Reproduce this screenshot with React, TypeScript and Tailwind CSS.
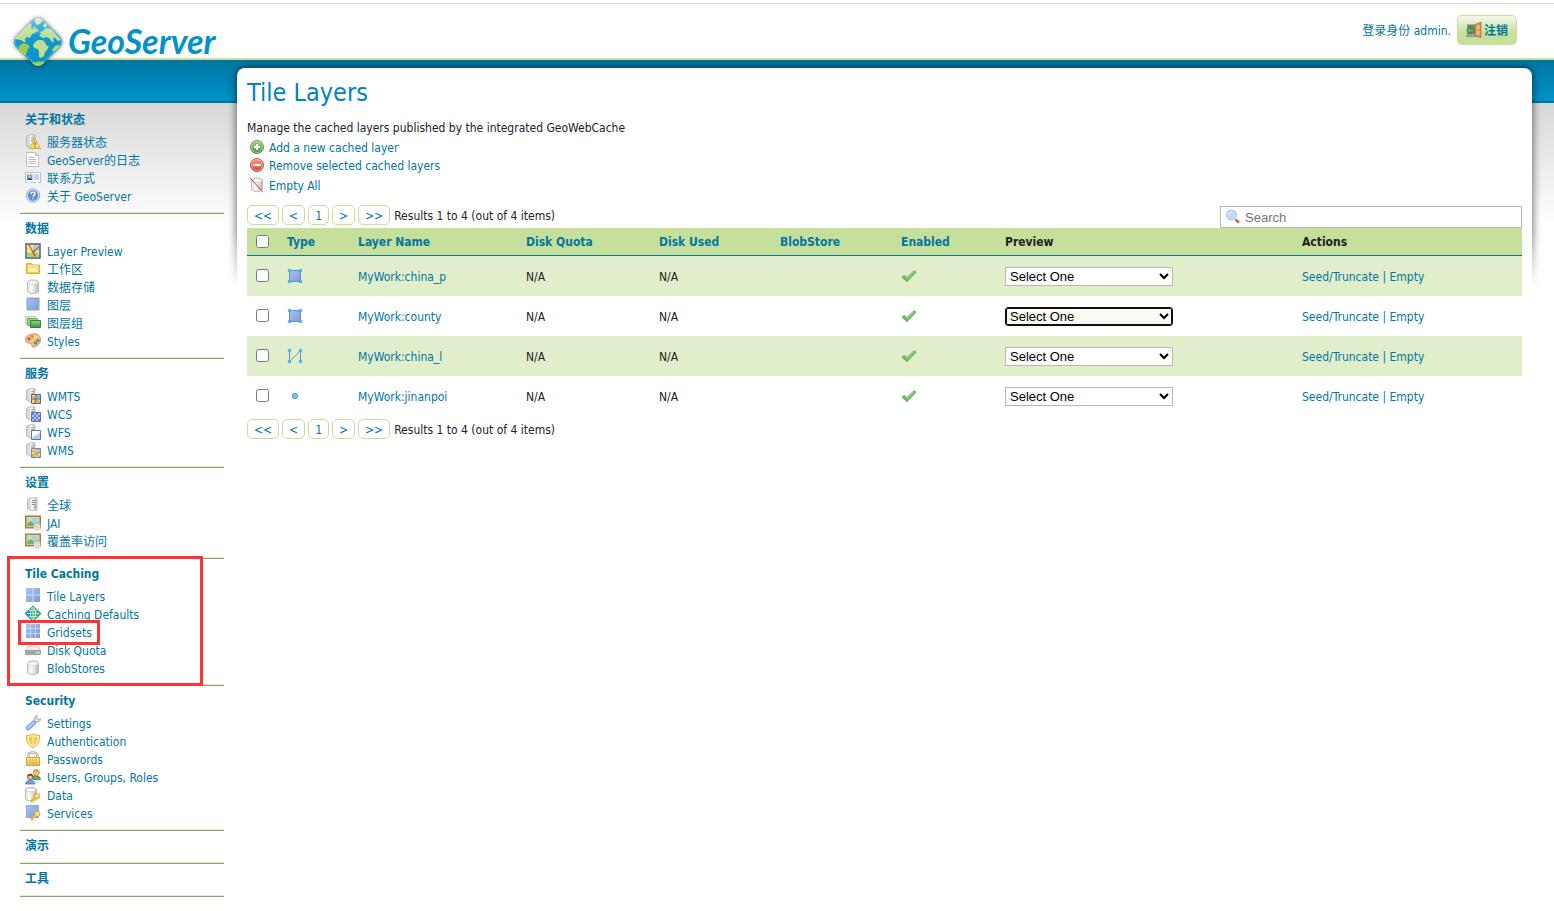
import { useState } from 'react'
import type { ReactNode } from 'react'
import { twMerge } from 'tailwind-merge'

type IconProps = { className?: string }

const Icon: React.FC<{ className?: string; children: ReactNode }> = ({
	className,
	children,
}) => (
	<svg
		viewBox="0 0 16 16"
		aria-hidden="true"
		className={twMerge('h-4 w-4 shrink-0', className)}
	>
		{children}
	</svg>
)

const Gradients = () => (
	<svg className="absolute h-0 w-0" aria-hidden="true">
		<defs>
			<linearGradient id="metal" x1="0" x2="1">
				<stop offset="0" stopColor="#e0e0e0" />
				<stop offset=".35" stopColor="#fcfcfc" />
				<stop offset="1" stopColor="#b9b9b9" />
			</linearGradient>
			<linearGradient id="sky" x1="0" y1="0" x2="1" y2="1">
				<stop offset="0" stopColor="#a9c2ec" />
				<stop offset="1" stopColor="#7c9dda" />
			</linearGradient>
			<linearGradient id="gold" x1="0" y1="0" x2="0" y2="1">
				<stop offset="0" stopColor="#fdeb9c" />
				<stop offset="1" stopColor="#eeb73c" />
			</linearGradient>
			<linearGradient id="leaf" x1="0" y1="0" x2="0" y2="1">
				<stop offset="0" stopColor="#9fd08c" />
				<stop offset="1" stopColor="#3f9436" />
			</linearGradient>
			<linearGradient id="rose" x1="0" y1="0" x2="0" y2="1">
				<stop offset="0" stopColor="#f6a08f" />
				<stop offset="1" stopColor="#d93a2c" />
			</linearGradient>
			<linearGradient id="logo-sea" x1="0" y1="0" x2="0" y2="1">
				<stop offset="0" stopColor="#4db4de" />
				<stop offset=".4" stopColor="#0f9ad1" />
				<stop offset="1" stopColor="#0a8fc6" />
			</linearGradient>
		</defs>
	</svg>
)

const ServerShape = () => (
	<>
		<path
			d="M1.500 2.500 4.500.8H10v13H4.500l-3-1.800Z"
			fill="#d9d9d9"
			stroke="#a6a6a6"
			strokeWidth=".7"
		/>
		<path d="M4.500 1.200H9.700v12.200H4.500Z" fill="url(#metal)" />
		<path d="M6 3.500h3M6 5.500h3M6 7.500h3" stroke="#9a9a9a" strokeWidth=".8" />
	</>
)

const StatusIcon = () => (
	<Icon>
		<ServerShape />
		<path d="M10 4.500 15.600 14.500H4.400Z" fill="#fbdc72" stroke="#e0a534" strokeWidth=".9" />
		<path d="M10 8v3M10 12.300v1.100" stroke="#7a5310" strokeWidth="1.200" />
	</Icon>
)

const PageIcon = () => (
	<Icon>
		<path d="M1.500.5h9l3 3v11h-12Z" fill="#fff" stroke="#bdbdbd" />
		<path d="M10.500.5v3h3" fill="#e8e8e8" stroke="#bdbdbd" />
		<path
			d="M3.500 5.500h6M3.500 7.500h8M3.500 9.500h8M3.500 11.500h8"
			stroke="#a8a8a8"
			strokeWidth=".8"
		/>
	</Icon>
)

const CardIcon = () => (
	<Icon>
		<path d="M.5 2.500h15v10H.5Z" fill="#f7f9fc" stroke="#b5c0cd" />
		<path d="M2 4.500h5.500v5.500H2Z" fill="#5f9ad8" />
		<circle cx="4.700" cy="6.500" r="1.500" fill="#e8b48c" />
		<path d="M2.300 10c.3-2.300 4.500-2.300 4.800 0Z" fill="#27486e" />
		<path d="M9 5h5M9 7h5M9 9h5" stroke="#9fb3c9" />
		<path d="M3 12.500h2M11 12.500h2" stroke="#fff" strokeWidth="1.400" />
	</Icon>
)

const HelpIcon = () => (
	<Icon>
		<circle cx="8" cy="7.500" r="6.700" fill="#dbe7f6" stroke="#93aed6" />
		<circle cx="8" cy="7.500" r="5.200" fill="#5e8fcb" />
		<path
			d="M6 6c.1-2.500 4.100-2.400 4 0 0 1.400-2 1.300-2 2.800M8 9.900v1.300"
			fill="none"
			stroke="#fff"
			strokeWidth="1.400"
		/>
	</Icon>
)

const MapIcon = () => (
	<Icon>
		<path d="M1 1h14v14H1Z" fill="#f6ecae" stroke="#4c6560" strokeWidth="1.500" />
		<path d="M8 2h6v6H8Z" fill="#a9cbea" />
		<path d="M2 9l4 1 4-2 4 3v3H2Z" fill="#a7cf7a" />
		<path d="M4 2l6 11M14 4 8 9" fill="none" stroke="#dc4a34" strokeWidth="1.400" />
		<path d="M6 2v12M2 6h12" stroke="#e2b758" strokeWidth=".6" />
	</Icon>
)

const FolderIcon = () => (
	<Icon>
		<path d="M1.500 12.500v-10h5l1 1.500h7v8.500Z" fill="#f5c84e" stroke="#dfab3a" />
		<path d="M3 6.500h10v4.500H3Z" fill="#fdeeb0" />
		<path d="M3 5h10" stroke="#fffbe6" />
	</Icon>
)

const DatabaseShape = () => (
	<>
		<path
			d="M2.500 3.500c0-3.500 11-3.500 11 0v8.500c0 3.300-11 3.300-11 0Z"
			fill="url(#metal)"
			stroke="#b0b0b0"
			strokeWidth=".8"
		/>
		<path d="M3 3.500c0-2.500 10-2.500 10 0s-10 2.500-10 0Z" fill="#fafafa" stroke="#c4c4c4" strokeWidth=".6" />
	</>
)

const DatabaseIcon: React.FC<IconProps> = ({ className }) => (
	<Icon className={className}>
		<DatabaseShape />
	</Icon>
)

const LayerIcon = () => (
	<Icon>
		<path d="M1.500.5h13v13h-13Z" fill="#fff" stroke="#c3d4ef" />
		<path d="M2.500 1.500h11v11h-11Z" fill="url(#sky)" stroke="#7396d2" strokeWidth=".8" />
	</Icon>
)

const LayerGroupIcon = () => (
	<Icon>
		<path d="M.500 1.500h10v7H.5Z" fill="#d6e8d2" stroke="#b6d3b1" />
		<path d="M2.500 3.500h10v7h-10Z" fill="#9fcb97" stroke="#74aa6c" />
		<path d="M5.500 5.500h10v7h-10Z" fill="url(#leaf)" stroke="#37803a" />
	</Icon>
)

const PaletteIcon = () => (
	<Icon>
		<path
			d="M7.500 1C12 0 15.500 2.500 15.500 6.500c0 4.500-4 7.500-7 7.500-2.500 0-1-3-3-3.500C3 10 .5 9.500.5 6.500S3 2 7.500 1Z"
			fill="#efc190"
			stroke="#c08149"
			strokeWidth=".8"
		/>
		<circle cx="4" cy="6" r="1.400" fill="#d9433b" />
		<circle cx="7" cy="3.500" r="1.400" fill="#e8873e" />
		<circle cx="11" cy="4" r="1.400" fill="#f3e36a" />
		<circle cx="13" cy="7.500" r="1.400" fill="#3e7fc4" />
		<circle cx="10.500" cy="10" r="1.800" fill="#4aa657" />
	</Icon>
)

const WmtsIcon = () => (
	<Icon>
		<ServerShape />
		<path d="M6.500 6.500h9v9h-9Z" fill="#f4d879" stroke="#5b688a" />
		<path d="M11.500 7h3.500v3.500h-3.500Z" fill="#8eb7e6" />
		<path d="M7.500 8l3 3-1 4M12 12l3 3" stroke="#e0654a" fill="none" />
		<path d="M11 6.500v9M6.500 11h9" stroke="#5b688a" />
	</Icon>
)

const WcsIcon = () => (
	<Icon>
		<ServerShape />
		<path d="M6.500 6.500h9v9h-9Z" fill="#b7cbee" stroke="#5a74b8" />
		<path
			d="M7 7h2v2H7ZM11 7h2v2h-2ZM9 9h2v2H9ZM13 9h2v2h-2ZM7 11h2v2H7ZM11 11h2v2h-2ZM9 13h2v2H9ZM13 13h2v2h-2Z"
			fill="#5b80cd"
		/>
	</Icon>
)

const WfsIcon = () => (
	<Icon>
		<ServerShape />
		<path d="M6.500 6.500h9v9h-9Z" fill="#fff" stroke="#5a74b8" />
		<path d="M7 15c1-4 5-3 8-7v7Z" fill="#b3cdf0" />
	</Icon>
)

const WmsIcon = () => (
	<Icon>
		<ServerShape />
		<path d="M6.500 6.500h9v9h-9Z" fill="#f7da7c" stroke="#7a82b0" />
		<path d="M11 7h4v3h-4Z" fill="#a3c5ea" />
		<path d="M7 12h3l1 3H7Z" fill="#9ccb74" />
		<path d="M7.500 8l7 7M15 10l-5 2" stroke="#e0654a" />
	</Icon>
)

const ServerIcon = () => (
	<Icon>
		<path
			d="M2.500 2.500 5.500.8H12v12.500H5.500l-3-1.800Z"
			fill="#dcdcdc"
			stroke="#ababab"
			strokeWidth=".8"
		/>
		<path d="M5.500 1.200h6.100v11.700H5.500Z" fill="url(#metal)" />
		<path d="M7 3.500h3.500M7 5.500h3.500M7 7.500h3.500" stroke="#8f8f8f" />
		<path d="M9 10.500h1.500" stroke="#4da14b" strokeWidth="1.500" />
	</Icon>
)

const PictureIcon = () => (
	<Icon>
		<path d="M.8 1.300h14.400v11.400H.8Z" fill="#a5d3ec" stroke="#b07a30" strokeWidth="1.600" />
		<path d="M2 2.500h12v9.100H2Z" fill="none" stroke="#f0d79b" strokeWidth=".7" />
		<path d="M2.300 8.500 5.500 6l3 2.500 5.200-1.500v4.300H2.300Z" fill="#78b35c" />
		<circle cx="5" cy="4.500" r="1.200" fill="#f7e77a" />
		<circle cx="12" cy="11.500" r="3.500" fill="#e4e4e4" stroke="#a8a8a8" strokeDasharray="1.800 1.200" />
		<circle cx="12" cy="11.500" r="1.200" fill="#fff" stroke="#a8a8a8" strokeWidth=".6" />
	</Icon>
)

const TileLayersIcon = () => (
	<Icon>
		<path d="M1 0h14v14H1Z" fill="url(#sky)" />
		<path d="M8 0v14M1 7h14" stroke="#d3e0f5" />
	</Icon>
)

const CachingIcon = () => (
	<Icon>
		<path d="M8 0 16 7.500 8 15.500 0 7.500Z" fill="#209aa6" stroke="#1c8a98" strokeWidth=".8" />
		<path d="M8 1 15 7.500 8 14.500Z" fill="#4fb55a" />
		<ellipse cx="8" cy="7.500" rx="2.500" ry="6" fill="none" stroke="#d9f2ee" strokeWidth=".8" />
		<path d="M2 7.500h12M4 4.500h8M4 10.500h8M8 1.500v12" stroke="#d9f2ee" strokeWidth=".8" />
	</Icon>
)

const GridsetsIcon = () => (
	<Icon>
		<path d="M1 0h14v14H1Z" fill="url(#sky)" />
		<path d="M5.500 0v14M10.500 0v14M1 4.500h14M1 9.500h14" stroke="#c9d8f2" />
	</Icon>
)

const DiskIcon = () => (
	<Icon>
		<path d="M3 4h10l2.500 4.500H.5Z" fill="#f0f0f0" stroke="#c4c4c4" strokeWidth=".8" />
		<path d="M.500 8.500h15v4H.5Z" fill="#b9b9b9" stroke="#8f8f8f" strokeWidth=".8" />
		<path d="M2 10.500h8" stroke="#8a8a8a" />
		<path d="M12.500 10.500h1.500" stroke="#fff" />
	</Icon>
)

const WrenchIcon = () => (
	<Icon>
		<path
			d="M9 5.500C8.500 3 10 .8 12.500.8L11.500 3l1.500 1.500 2.500-.8c.2 2.300-2 4.300-4.500 3.600Z"
			fill="#dcdcdc"
			stroke="#9a9a9a"
			strokeWidth=".8"
		/>
		<path d="M8.500 5.500 11 8l-6.500 6.500c-2 1.500-4.500-.8-3-3Z" fill="#9dbce8" stroke="#5f88c6" strokeWidth=".8" />
		<path d="M8 7.500 3 12.500" stroke="#d2e2f7" />
	</Icon>
)

const ShieldIcon = () => (
	<Icon>
		<path
			d="M8 .8c2 1.400 4 1.800 6.500 1.500.3 6-1.500 10.200-6.500 12.200C3 12.500 1.200 8.300 1.500 2.300 4 2.600 6 2.200 8 .8Z"
			fill="#fdf0b4"
			stroke="#e0a92f"
		/>
		<path d="M8 3c1.400.9 2.800 1.300 4.500 1.300C12.400 8.500 11 11.200 8 12.500 5 11.200 3.600 8.500 3.500 4.300 5.200 4.300 6.600 3.900 8 3Z" fill="#f3c84c" />
		<path d="M8 3v9.500" stroke="#fff7d1" />
	</Icon>
)

const LockIcon = () => (
	<Icon>
		<path d="M3.500 8V4.500c0-4 9-4 9 0V8" fill="none" stroke="#a8a8a8" strokeWidth="2.400" />
		<path d="M3.500 8V4.500c0-4 9-4 9 0V8" fill="none" stroke="#ececec" strokeWidth="1" />
		<path d="M1.500 6.500h13v8h-13Z" fill="url(#gold)" stroke="#d79f35" />
		<path d="M4 9h2M7 9h2M10 9h2M4 12h2M7 12h2M10 12h2" stroke="#d79f35" />
	</Icon>
)

const UsersIcon = () => (
	<Icon>
		<path d="M7 9c0-3.500 8.500-3.500 8.500 1.500H8Z" fill="#5fae4b" stroke="#3d7f30" strokeWidth=".7" />
		<circle cx="11.300" cy="3.500" r="3" fill="#f0c79c" stroke="#c58a3a" strokeWidth=".9" />
		<path d="M8.300 3.500c0-4 6-4 6 0-2-1.500-4-1.500-6 0Z" fill="#d8a23f" />
		<path d="M.500 15c0-5 9.500-5 9.500 0Z" fill="#6ea3e0" stroke="#3f72b5" strokeWidth=".7" />
		<circle cx="5.200" cy="8" r="2.800" fill="#f0bf95" stroke="#8a4a28" strokeWidth=".8" />
		<path d="M2.300 8c0-4.200 5.800-4.200 5.800 0-2-1.600-4-1.600-5.800 0Z" fill="#7d3f20" />
	</Icon>
)

const KeyShape = () => (
	<>
		<circle cx="12" cy="9" r="2.800" fill="#fbd765" stroke="#d79f35" strokeWidth=".9" />
		<path d="m10 11-4 4" stroke="#d79f35" strokeWidth="2.600" />
		<path d="m10.200 11-3.800 3.700" stroke="#f8cf58" strokeWidth="1.200" />
		<circle cx="12.800" cy="8.300" r=".8" fill="#fff" />
	</>
)

const DataKeyIcon = () => (
	<Icon>
		<g transform="translate(-2 -.5)">
			<DatabaseShape />
		</g>
		<KeyShape />
	</Icon>
)

const ServiceKeyIcon = () => (
	<Icon>
		<path d="M1.500.5h12v12h-12Z" fill="url(#sky)" stroke="#7396d2" strokeWidth=".7" />
		<KeyShape />
	</Icon>
)

const AddIcon = () => (
	<Icon>
		<circle cx="8" cy="8" r="6.600" fill="url(#leaf)" stroke="#5c9f53" strokeWidth=".9" />
		<circle cx="8" cy="8" r="5.500" fill="none" stroke="#bfe0b3" strokeWidth=".7" />
		<path d="M8 5v6M5 8h6" stroke="#fff" strokeWidth="2.200" />
	</Icon>
)

const RemoveIcon = () => (
	<Icon>
		<circle cx="8" cy="8" r="6.600" fill="url(#rose)" stroke="#cc544a" strokeWidth=".9" />
		<circle cx="8" cy="8" r="5.500" fill="none" stroke="#f6bcb2" strokeWidth=".7" />
		<path d="M4.500 8h7" stroke="#fff" strokeWidth="2.200" />
	</Icon>
)

const EmptyIcon = () => (
	<Icon>
		<DatabaseShape />
		<path d="m1 .8 13 14.400" stroke="#e02c2c" />
	</Icon>
)

const DoorIcon = () => (
	<Icon>
		<path d="M1 2.500h9v10H1Z" fill="#7d7d7d" />
		<path d="M0 13h11v2H0Z" fill="#9a9a9a" />
		<path d="m9 2.500 6-2.200v15.400l-6-2Z" fill="#d79a5c" stroke="#a8713a" strokeWidth=".8" />
		<path d="M10.500 4 13.500 3v4l-3 .5ZM10.500 9l3 .3v4l-3-1Z" fill="#eabd87" />
		<path d="M.500 8.500 4.500 4.800V7H8v3H4.500v2.200Z" fill="#67bb58" stroke="#2b7d2a" strokeWidth=".8" />
	</Icon>
)

const SearchIcon: React.FC<IconProps> = ({ className }) => (
	<Icon className={className}>
		<path d="m10.500 10.500 3.500 3" stroke="#b4703a" strokeWidth="2.600" />
		<circle cx="6.500" cy="6" r="4.900" fill="#c4dcf6" stroke="#b3c8e4" strokeWidth="1.200" />
		<path d="M4 5.500c.3-1.500 1.300-2.200 2.700-2.300" stroke="#fff" fill="none" />
	</Icon>
)

const Corners = () => (
	<g fill="#6cc6f5" stroke="#1fa2f0">
		<circle cx="2.500" cy="2.500" r="1.200" />
		<circle cx="13.500" cy="2.500" r="1.200" />
		<circle cx="2.500" cy="13.500" r="1.200" />
		<circle cx="13.500" cy="13.500" r="1.200" />
	</g>
)

const PolygonIcon = () => (
	<Icon>
		<path d="M2.500 2.500h11v11h-11Z" fill="url(#sky)" stroke="#6a8cd2" />
		<Corners />
	</Icon>
)

const LineIcon = () => (
	<Icon>
		<path d="M2.500 2.500v11l11-11v11" fill="none" stroke="#6a8cd2" />
		<Corners />
	</Icon>
)

const PointIcon = () => (
	<Icon>
		<circle cx="8" cy="8" r="2.600" fill="#7cc3ec" stroke="#2f9be0" />
	</Icon>
)

const TickIcon = () => (
	<Icon>
		<path
			d="m1 9.300 2-2 2.800 2.400 7.200-7L15.200 4 6 13.700Z"
			fill="#6fbb62"
			stroke="#5ba553"
			strokeWidth=".8"
		/>
		<path d="M5.800 10.800 13.300 3.500" stroke="#a6dc97" />
	</Icon>
)

const Logo = () => (
	<svg
		viewBox="0 0 52 52"
		aria-hidden="true"
		className="h-[52px] w-[52px] shrink-0 drop-shadow-[0_0_2px_rgba(0,0,0,0.55)]"
	>
		<defs>
			<clipPath id="logo-clip">
				<rect x="7" y="6" width="38" height="38" rx="7" transform="rotate(45 26 25)" />
			</clipPath>
		</defs>
		<g clipPath="url(#logo-clip)">
			<path d="M0 0h52v52H0Z" fill="url(#logo-sea)" />
			{/* Greenland */}
			<path d="M22 0h8l1 3-3 4-3 1-2-3Z" fill="#d5eabf" />
			{/* North America */}
			<path
				d="M2 21 13 10l5-4 2 2-1 3 2 1 1-3 3 3 2 2-3 1-4 2-2 4-3-1-2 2 0 2 2 1-3 0-3-2-7-1Z"
				fill="#c0df96"
			/>
			{/* South America */}
			<path d="M7 29l4-3 4 1 3 3-2 2-1 3-2 4-6-6Z" fill="#9ccb45" />
			{/* Europe and Asia */}
			<path
				d="M27 19l2-2-1-2 3-1 3-3 5 1 10 11-3 1-3-3-2 0 1 4-2 0-3-4-3-1-2 1-3-1Z"
				fill="#bfdf98"
			/>
			<path d="M31 9l2-3 2 2-2 3Z" fill="#d5eabf" />
			{/* Africa */}
			<path
				d="M23 25l3-2 4 0 2 1 3 5h2l-2 4-2 2-1 4-3 2-2-1 0-5-1-3-4-1-1-3Z"
				fill="#bfdf8a"
			/>
			<path d="M40 33l3-4 3-1 2 1-4 4-3 2Z" fill="#b5d973" />
			{/* Antarctica */}
			<path d="M19 46c5-1 10-2 14-1l-6 7Z" fill="#9ccb45" />
			<path d="M0 0h52v14C38 18 14 14 0 22Z" fill="#fff" opacity=".1" />
		</g>
		<rect
			x="8"
			y="7"
			width="36"
			height="36"
			rx="6"
			transform="rotate(45 26 25)"
			fill="none"
			stroke="#fff"
			strokeOpacity=".25"
		/>
	</svg>
)

interface MenuSection {
	title: string
	marked?: boolean
	items: { label: string; icon: ReactNode; marked?: boolean }[]
}

const menu: MenuSection[] = [
	{
		title: '关于和状态',
		items: [
			{ label: '服务器状态', icon: <StatusIcon /> },
			{ label: 'GeoServer的日志', icon: <PageIcon /> },
			{ label: '联系方式', icon: <CardIcon /> },
			{ label: '关于 GeoServer', icon: <HelpIcon /> },
		],
	},
	{
		title: '数据',
		items: [
			{ label: 'Layer Preview', icon: <MapIcon /> },
			{ label: '工作区', icon: <FolderIcon /> },
			{ label: '数据存储', icon: <DatabaseIcon /> },
			{ label: '图层', icon: <LayerIcon /> },
			{ label: '图层组', icon: <LayerGroupIcon /> },
			{ label: 'Styles', icon: <PaletteIcon /> },
		],
	},
	{
		title: '服务',
		items: [
			{ label: 'WMTS', icon: <WmtsIcon /> },
			{ label: 'WCS', icon: <WcsIcon /> },
			{ label: 'WFS', icon: <WfsIcon /> },
			{ label: 'WMS', icon: <WmsIcon /> },
		],
	},
	{
		title: '设置',
		items: [
			{ label: '全球', icon: <ServerIcon /> },
			{ label: 'JAI', icon: <PictureIcon /> },
			{ label: '覆盖率访问', icon: <PictureIcon /> },
		],
	},
	{
		title: 'Tile Caching',
		marked: true,
		items: [
			{ label: 'Tile Layers', icon: <TileLayersIcon /> },
			{ label: 'Caching Defaults', icon: <CachingIcon /> },
			{ label: 'Gridsets', icon: <GridsetsIcon />, marked: true },
			{ label: 'Disk Quota', icon: <DiskIcon /> },
			{ label: 'BlobStores', icon: <DatabaseIcon /> },
		],
	},
	{
		title: 'Security',
		items: [
			{ label: 'Settings', icon: <WrenchIcon /> },
			{ label: 'Authentication', icon: <ShieldIcon /> },
			{ label: 'Passwords', icon: <LockIcon /> },
			{ label: 'Users, Groups, Roles', icon: <UsersIcon /> },
			{ label: 'Data', icon: <DataKeyIcon /> },
			{ label: 'Services', icon: <ServiceKeyIcon /> },
		],
	},
	{ title: '演示', items: [] },
	{ title: '工具', items: [] },
]

const layers = [
	{ name: 'MyWork:china_p', icon: <PolygonIcon /> },
	{ name: 'MyWork:county', icon: <PolygonIcon />, active: true },
	{ name: 'MyWork:china_l', icon: <LineIcon /> },
	{ name: 'MyWork:jinanpoi', icon: <PointIcon /> },
]

const columns = [
	{ label: 'Type', width: 'w-[71px]', sortable: true },
	{ label: 'Layer Name', width: 'w-[168px]', sortable: true },
	{ label: 'Disk Quota', width: 'w-[133px]', sortable: true },
	{ label: 'Disk Used', width: 'w-[121px]', sortable: true },
	{ label: 'BlobStore', width: 'w-[121px]', sortable: true },
	{ label: 'Enabled', width: 'w-[104px]', sortable: true },
	{ label: 'Preview', width: 'w-[297px]', sortable: false },
	{ label: 'Actions', width: '', sortable: false },
]

const Header = () => (
	<header className="relative z-10 mt-[3px] flex h-[55px] items-start justify-between border-t border-[#dcdcdc] pr-[37px] pl-3">
		<a href="#home" className="mt-[13px] flex items-start gap-1">
			<Logo />
			<span className="font-['Lato'] text-[34px] leading-[48px] font-bold text-[#0092c9] italic">
				GeoServer
			</span>
		</a>
		<div className="mt-[11px] flex items-center gap-[6px]">
			<span className="pt-0.5">登录身份 admin.</span>
			<button
				type="button"
				className="flex h-[30px] items-center gap-0.5 rounded-[5px] border border-[#c6e09b] bg-linear-to-b from-[#f4f9eb] to-[#c6e09b] to-60% px-2 font-bold"
			>
				<DoorIcon />
				<span className="pt-0.5">注销</span>
			</button>
		</div>
	</header>
)

const Sidebar = () => (
	<nav className="w-[204px] shrink-0 pt-[45px]">
		{menu.map((section) => (
			<section
				key={section.title}
				className="relative border-b border-[#8f9c7c] pt-[6px]"
			>
				<h3 className="pl-[5px] leading-[18px] font-bold">{section.title}</h3>
				{section.items.length > 0 && (
					<ul className="mt-1">
						{section.items.map((item) => (
							<li key={item.label} className="relative pl-[5px]">
								<a href="#menu" className="flex h-[18px] items-center gap-[6px]">
									{item.icon}
									<span className="pt-0.5">{item.label}</span>
								</a>
								{item.marked && (
									<span className="absolute -top-[3px] -left-[2px] z-10 h-[25px] w-[82px] border-3 border-[#ff3333]" />
								)}
							</li>
						))}
					</ul>
				)}
				<div className="mt-[7px] h-px bg-[#e0eecb]" />
				{section.marked && (
					<span className="absolute -top-[3px] -bottom-px -left-[13px] z-10 w-[196px] border-3 border-[#ff3333]" />
				)}
			</section>
		))}
	</nav>
)

const Pager: React.FC<{ className?: string }> = ({ className }) => (
	<div className={twMerge('flex items-center gap-[3px]', className)}>
		{['<<', '<', '1', '>', '>>'].map((label) => (
			<button
				key={label}
				type="button"
				className="h-5 rounded-[5px] border border-[#c6e09b] bg-white px-[6px] pt-px"
			>
				{label}
			</button>
		))}
		<span className="pt-0.5 pl-px text-[#222222]">
			Results 1 to 4 (out of 4 items)
		</span>
	</div>
)

const LayerTable = () => {
	const [selected, setSelected] = useState<string[]>([])

	const toggle = (name: string) =>
		setSelected(
			selected.includes(name)
				? selected.filter((item) => item !== name)
				: [...selected, name],
		)

	return (
		<table className="w-full table-fixed text-left">
			<thead>
				<tr className="h-7 bg-[#c6e09b] shadow-[inset_0_-1px_0_#0076a1]">
					<th className="w-8 pb-0.5 pl-[9px]">
						<input
							type="checkbox"
							aria-label="Select all layers"
							className="block h-[13px] w-[13px]"
							checked={selected.length === layers.length}
							onChange={(event) =>
								setSelected(
									event.target.checked ? layers.map((layer) => layer.name) : [],
								)
							}
						/>
					</th>
					{columns.map((column) => (
						<th
							key={column.label}
							className={twMerge('pl-2 font-bold text-[#222222]', column.width)}
						>
							{column.sortable ? (
								<a href="#sort" className="text-[#0076a1]">
									{column.label}
								</a>
							) : (
								column.label
							)}
						</th>
					))}
				</tr>
			</thead>
			<tbody className="[&>*:nth-child(odd)]:bg-[#e0eecb]">
				{layers.map((layer) => (
					<tr key={layer.name} className="h-10 text-[#222222]">
						<td className="pb-0.5 pl-[9px]">
							<input
								type="checkbox"
								aria-label={layer.name}
								className="block h-[13px] w-[13px]"
								checked={selected.includes(layer.name)}
								onChange={() => toggle(layer.name)}
							/>
						</td>
						<td className="pl-2">{layer.icon}</td>
						<td className="pt-0.5 pl-2">
							<a href="#layer" className="text-[#0076a1]">
								{layer.name}
							</a>
						</td>
						<td className="pt-0.5 pl-2">N/A</td>
						<td className="pt-0.5 pl-2">N/A</td>
						<td className="pl-2" />
						<td className="pl-2">
							<TickIcon />
						</td>
						<td className="pl-2">
							<select
								aria-label={'Preview ' + layer.name}
								className={twMerge(
									"block h-[19px] w-[168px] border border-[#b7b7b7] bg-white font-['Liberation_Sans',sans-serif] text-[13px] text-black",
									layer.active &&
										'rounded-[3px] border-[#101010] bg-[#fafaf2] shadow-[inset_0_0_0_1px_#101010]',
								)}
							>
								<option>Select One</option>
							</select>
						</td>
						<td className="pt-0.5 pl-2 text-[#0076a1]">
							<a href="#seed">Seed/Truncate</a> | <a href="#empty">Empty</a>
						</td>
					</tr>
				))}
			</tbody>
		</table>
	)
}

const App = () => (
	<div className="min-h-screen bg-white font-['DejaVu_Sans_Condensed','Noto_Sans_CJK_SC',sans-serif] text-[12px] text-[#0076a1]">
		<Gradients />
		<Header />
		<div className="flex gap-[13px] border-t-2 border-[#c6e09b] bg-[linear-gradient(#0076a1_0,#0092c9_41px,#0076a1_41px,#0076a1_43px,#d8d8d8_43px,#ffffff_165px)] pr-[22px] pl-5">
			<Sidebar />
			<main className="relative mt-2 min-w-0 flex-1">
				{/* drop shadow that dies out down the sides of the panel */}
				<div className="absolute -inset-x-3 -top-2 h-[228px] overflow-hidden mask-b-from-75% mask-b-to-100% px-3 pt-2">
					<div className="h-[300px] rounded-[10px] shadow-[0_0_8px_1px_rgba(0,0,0,0.55)]" />
				</div>
				<div className="relative h-full rounded-t-[8px] bg-white px-[10px] pt-[7px]">
					<h2 className="text-[25px] leading-[36px] text-[#0084bf]">Tile Layers</h2>
					<p className="mt-2 leading-[18px] text-[#222222]">
						Manage the cached layers published by the integrated GeoWebCache
					</p>
					<ul className="mt-px pl-[2px] leading-[18px]">
						<li>
							<a href="#add" className="flex h-[18px] items-center gap-1">
								<AddIcon />
								<span className="pt-px">Add a new cached layer</span>
							</a>
						</li>
						<li>
							<a href="#remove" className="flex h-[18px] items-center gap-1">
								<RemoveIcon />
								<span className="pt-px">Remove selected cached layers</span>
							</a>
						</li>
						<li className="mt-0.5">
							<a href="#empty-all" className="flex h-[18px] items-center gap-1">
								<EmptyIcon />
								<span className="pt-px">Empty All</span>
							</a>
						</li>
					</ul>
					<div className="mt-[11px] flex items-end justify-between">
						<Pager className="mb-[3px]" />
						<div className="relative w-[302px]">
							<SearchIcon className="absolute top-[3px] left-[5px]" />
							<input
								type="text"
								aria-label="Search"
								placeholder="Search"
								className="block h-[22px] w-full border border-[#b7b7b7] pl-6 font-['Liberation_Sans',sans-serif] text-[13px] placeholder:text-[#757575]"
							/>
						</div>
					</div>
					<LayerTable />
					<Pager className="mt-[3px]" />
				</div>
			</main>
		</div>
	</div>
)

export default App
